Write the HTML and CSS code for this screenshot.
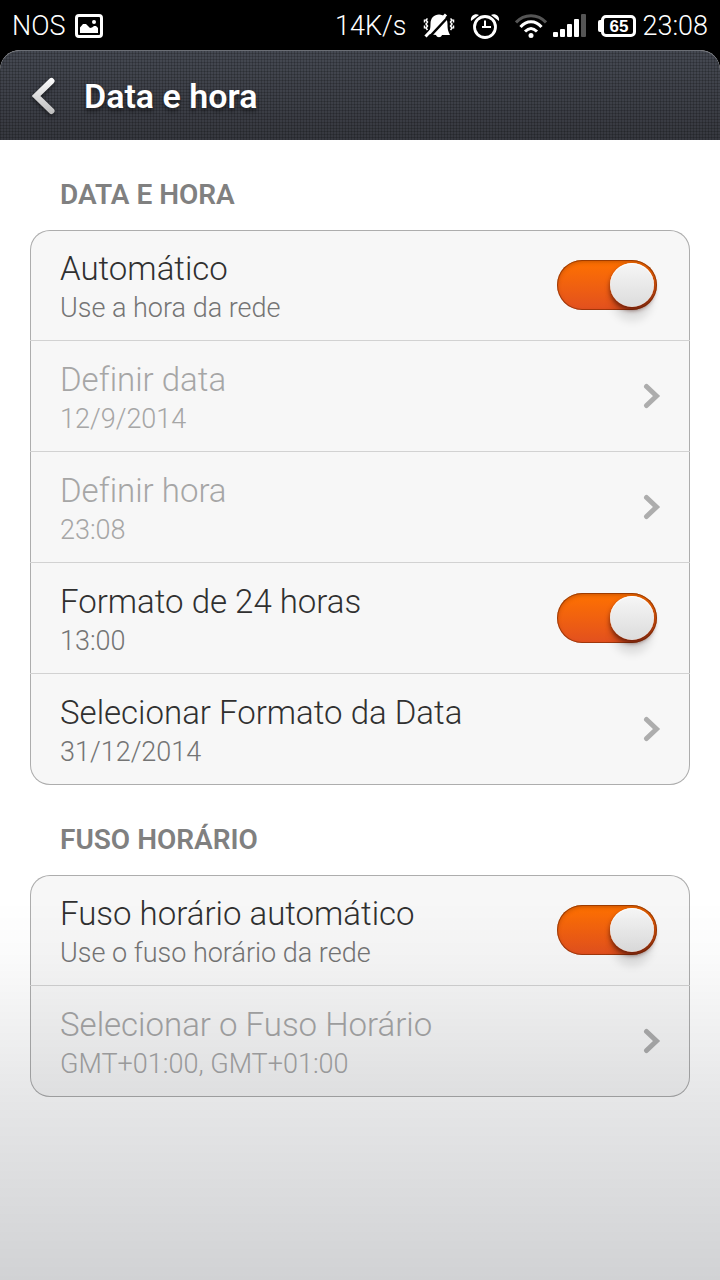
FILE: index.html
```html
<!DOCTYPE html>
<html lang="pt">
<head>
<meta charset="utf-8">
<meta name="viewport" content="width=device-width, initial-scale=1">
<title>Data e hora</title>
<link rel="stylesheet" href="styles.css">
</head>
<body>
<div class="status-bar">
  <span class="carrier">NOS</span>
  <svg class="icon-picture" width="28" height="24" viewBox="0 0 28 24" aria-hidden="true">
    <rect x="1.5" y="1.5" width="25" height="21" rx="2.5" fill="none" stroke="#fff" stroke-width="3"/>
    <path d="M5 19v-5.500l3-3.500h3l4 4 2-.5 2-1.500h2l2 2v5z" fill="#fff"/>
    <circle cx="19" cy="8" r="2" fill="#fff"/>
  </svg>
  <span class="net-speed">14K/s</span>
  <svg class="icon-mute" width="32" height="26" viewBox="0 0 32 26" aria-hidden="true">
    <path d="M5 21c2-3 2.500-6 2.500-10C7.500 5 11 1.500 16 1.500S24.500 5 24.500 11c0 5 .5 7 2.500 11h-8c-1 3-5 3-6 0z" fill="#fff"/>
    <path d="M2.500 23.500 23 1.500" stroke="#fff" stroke-width="3"/>
    <path d="M4.500 26 27 2" stroke="#000" stroke-width="2.500"/>
    <path d="M4.500 5.500 3 7l1.500 2L3 11l1.500 2L3 15l1.500 2M1.500 6.500v3M1.500 12.500v3M27.500 5.500 29 7l-1.500 2 1.500 2-1.500 2 1.500 2-1.500 2M30.500 6.500v3M30.500 12.500v3" fill="none" stroke="#fff" stroke-width="1.500"/>
  </svg>
  <svg class="icon-alarm" width="30" height="26" viewBox="0 0 30 26" aria-hidden="true">
    <circle cx="15" cy="14" r="10.500" fill="none" stroke="#fff" stroke-width="2.800"/>
    <path d="M15 7.500V14.500M12 14h9" fill="none" stroke="#fff" stroke-width="2"/>
    <path d="M1 8C0 3 5 0 9 2zM29 8c1-5-4-8-8-6z" fill="#fff"/>
  </svg>
  <svg class="icon-wifi" width="32" height="26" viewBox="0 0 32 26" fill="none" stroke-width="3" aria-hidden="true">
    <path d="M1 9.500C9 .5 23 .5 31 9.500" stroke="#555"/>
    <path d="M5.500 14c6-7 15-7 21 0M10 18.500c4-4 8-4 12 0" stroke="#fff"/>
    <circle cx="16" cy="22.500" r="2.500" fill="#fff"/>
  </svg>
  <svg class="icon-signal" width="34" height="24" viewBox="0 0 34 24" fill="#fff" aria-hidden="true">
    <rect x="0" y="18" width="5" height="5" rx="1"/>
    <rect x="7" y="15" width="5" height="8" rx="1"/>
    <rect x="14" y="10" width="5" height="13" rx="1"/>
    <rect x="21" y="5" width="5" height="18" rx="1"/>
    <rect x="28" y="0" width="5" height="23" rx="1" fill="#555"/>
  </svg>
  <span class="battery"><span class="battery-level">65</span></span>
  <time class="clock">23:08</time>
</div>

<header class="title-bar">
  <button class="back" type="button" aria-label="Voltar">
    <svg width="24" height="38" viewBox="0 0 24 38" aria-hidden="true">
      <defs>
        <linearGradient id="back-fill" gradientUnits="userSpaceOnUse" x1="0" y1="0" x2="0" y2="38">
          <stop offset="0" stop-color="#fff"/>
          <stop offset="1" stop-color="#bbb"/>
        </linearGradient>
      </defs>
      <path d="M19.500 4 4 19l15.500 15" fill="none" stroke="url(#back-fill)" stroke-width="6" stroke-linecap="round"/>
    </svg>
  </button>
  <h1 class="title">Data e hora</h1>
</header>

<main class="settings">
  <section>
    <h2 class="section-title">DATA E HORA</h2>
    <div class="card">
      <label class="row">
        <span class="row-text"><span class="row-title">Automático</span><span class="row-note">Use a hora da rede</span></span>
        <input class="switch" type="checkbox" role="switch" checked>
      </label>
      <button class="row" type="button" disabled>
        <span class="row-text"><span class="row-title">Definir data</span><span class="row-note">12/9/2014</span></span>
        <svg class="chevron" width="18" height="26" viewBox="0 0 18 26" aria-hidden="true"><path d="M3.500 3.500 13.500 13l-10 9.500"/></svg>
      </button>
      <button class="row" type="button" disabled>
        <span class="row-text"><span class="row-title">Definir hora</span><span class="row-note">23:08</span></span>
        <svg class="chevron" width="18" height="26" viewBox="0 0 18 26" aria-hidden="true"><path d="M3.500 3.500 13.500 13l-10 9.500"/></svg>
      </button>
      <label class="row">
        <span class="row-text"><span class="row-title">Formato de 24 horas</span><span class="row-note">13:00</span></span>
        <input class="switch" type="checkbox" role="switch" checked>
      </label>
      <button class="row" type="button">
        <span class="row-text"><span class="row-title">Selecionar Formato da Data</span><span class="row-note">31/12/2014</span></span>
        <svg class="chevron" width="18" height="26" viewBox="0 0 18 26" aria-hidden="true"><path d="M3.500 3.500 13.500 13l-10 9.500"/></svg>
      </button>
    </div>
  </section>
  <section>
    <h2 class="section-title">FUSO HORÁRIO</h2>
    <div class="card">
      <label class="row">
        <span class="row-text"><span class="row-title">Fuso horário automático</span><span class="row-note">Use o fuso horário da rede</span></span>
        <input class="switch" type="checkbox" role="switch" checked>
      </label>
      <button class="row" type="button" disabled>
        <span class="row-text"><span class="row-title">Selecionar o Fuso Horário</span><span class="row-note">GMT+01:00, GMT+01:00</span></span>
        <svg class="chevron" width="18" height="26" viewBox="0 0 18 26" aria-hidden="true"><path d="M3.500 3.500 13.500 13l-10 9.500"/></svg>
      </button>
    </div>
  </section>
</main>
<div class="shade"></div>
</body>
</html>
```
FILE: styles.css
```css
* { box-sizing: border-box; }

body {
  margin: 0;
  min-height: 100vh;
  background: #fff;
  font-family: Roboto, "Noto Sans", sans-serif;
  font-weight: 300;
  font-variant-ligatures: none;
  color: #303030;
}

.status-bar {
  display: flex;
  align-items: center;
  height: 50px;
  padding: 2px 12px 0;
  background: #000;
  color: #fff;
  font-size: 27px;
}

.icon-picture { margin-left: 10px; }
.net-speed { margin-left: auto; }
.icon-mute { margin-left: 17px; }
.icon-alarm { margin-left: 15px; }
.icon-wifi { margin-left: 15px; }
.icon-signal { margin-left: 6px; }

.battery {
  display: flex;
  align-items: center;
  margin-left: 11px;
}

.battery::before {
  content: "";
  width: 3px;
  height: 12px;
  border-radius: 2px 0 0 2px;
  background: #fff;
}

.battery-level {
  width: 35px;
  height: 22px;
  border: 3px solid #fff;
  border-radius: 5px;
  font: bold 17px/17px "Liberation Sans", sans-serif;
  text-align: center;
}

.clock { margin-left: 6px; }

.title-bar {
  display: flex;
  align-items: center;
  gap: 28px;
  height: 90px;
  padding: 2px 32px 0;
  border-radius: 20px 20px 0 0;
  background:
    repeating-linear-gradient(90deg, rgba(0, 0, 0, 0.18) 0 1px, transparent 1px 3px),
    repeating-linear-gradient(rgba(0, 0, 0, 0.18) 0 1px, transparent 1px 3px),
    linear-gradient(#454952, #36383f);
  box-shadow: inset 0 2px 0 -1px #6b6e75, 0 -20px 0 20px #000;
  clip-path: inset(0);
  color: #fff;
}

.back {
  display: flex;
  padding: 0;
  border: 0;
  background: none;
  filter: drop-shadow(0 2px 2px rgba(0, 0, 0, 0.5));
}

.title {
  margin: 0;
  font-size: 34px;
  font-weight: 600;
  text-shadow: 0 3px 4px rgba(0, 0, 0, 0.5);
}

.settings { padding: 0 30px 36px; }

.section-title {
  margin: 0;
  padding: 37px 30px 17px;
  font-size: 28px;
  line-height: 36px;
  font-weight: 600;
  color: #808080;
}

.card {
  border-radius: 20px;
  background: #f7f7f7;
  box-shadow: inset 0 0 0 1px #adadad;
}

.row {
  display: flex;
  align-items: center;
  width: 100%;
  padding: 18px 30px 14px;
  border: 0;
  border-bottom: 1px solid #d2d2d2;
  background: none;
  font: inherit;
  font-variant-ligatures: none;
  color: #303030;
  text-align: left;
}

.row:last-child { border-bottom-color: transparent; }

.row-text {
  flex: 1;
  display: flex;
  flex-direction: column;
}

.row-title {
  font-size: 33px;
  line-height: 42px;
}

.row-note {
  font-size: 27px;
  line-height: 36px;
  color: #747474;
}

.row:disabled,
.row:disabled .row-note { color: #a6a6a6; }

.chevron {
  margin: 0 -1px 4px 0;
  fill: none;
  stroke: #adadad;
  stroke-width: 5;
  stroke-linecap: round;
}

.switch {
  appearance: none;
  display: flex;
  justify-content: flex-end;
  width: 100px;
  height: 50px;
  margin: 0 3px 4px 0;
  padding: 3px;
  border-radius: 25px;
  background: linear-gradient(#ff7200, #e2501f);
  box-shadow: inset 0 0 0 1px rgba(120, 40, 0, 0.6), inset 0 2px 4px rgba(120, 40, 0, 0.4);
}

.switch::before {
  content: "";
  width: 44px;
  height: 44px;
  border-radius: 50%;
  background: linear-gradient(#f6f6f6, #dcdcdc);
  box-shadow: inset 0 1px 1px #fff, 0 3px 5px rgba(60, 10, 0, 0.7), 0 16px 8px -2px rgba(0, 0, 0, 0.1);
}

.switch:not(:checked) {
  justify-content: flex-start;
  background: #bbb;
}

.shade {
  position: fixed;
  inset: auto 0 0;
  height: 380px;
  background: linear-gradient(rgba(0, 6, 18, 0), rgba(0, 6, 18, 0.02) 16%, rgba(0, 6, 18, 0.1) 54%, rgba(0, 6, 18, 0.18));
  pointer-events: none;
}
```
